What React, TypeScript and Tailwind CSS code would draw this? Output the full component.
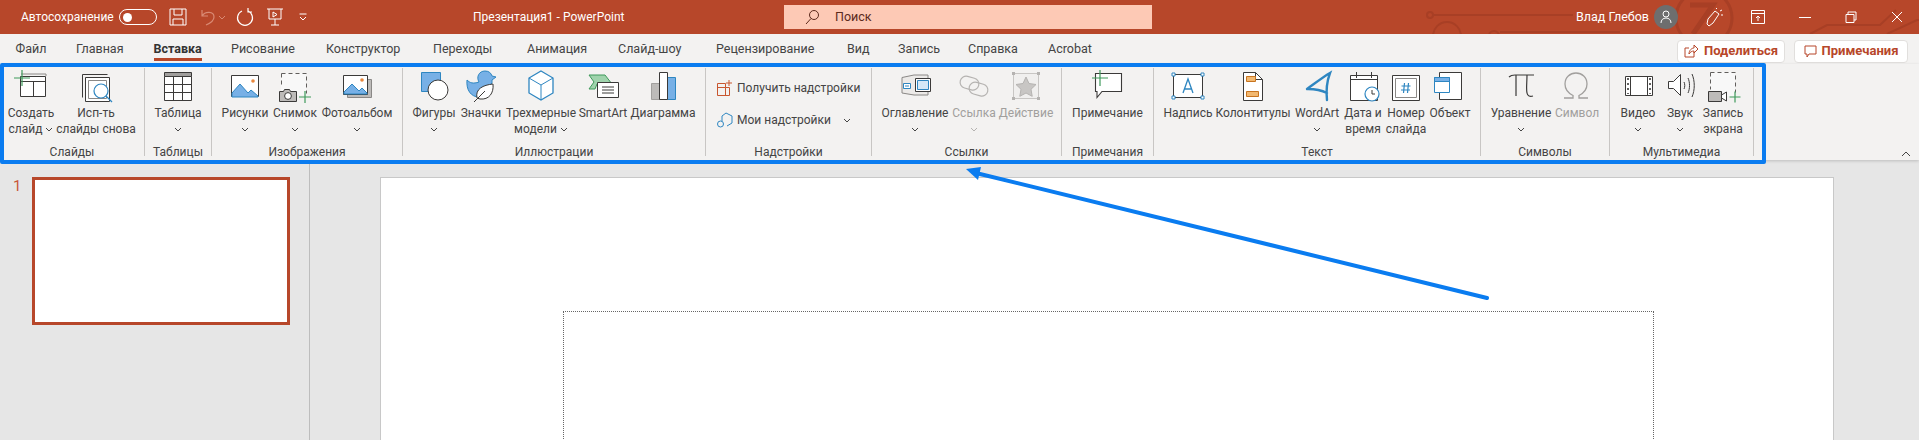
import type { ReactNode } from "react";

const Chevron = ({ color = "#444" }: { color?: string }) => (
  <svg width="8" height="5" viewBox="0 0 8 5" fill="none" stroke={color} strokeWidth="1">
    <path d="M1 1l3 3 3-3" />
  </svg>
);

const Plus = ({ x, y, s = 12 }: { x: number; y: number; s?: number }) => (
  <path d={`M${x - s / 2} ${y}h${s}M${x} ${y - s / 2}v${s}`} stroke="#3f9a5b" strokeWidth="1.2" fill="none" />
);

const Ico = ({ children, w = 36 }: { children: ReactNode; w?: number }) => (
  <svg width={w} height="34" viewBox={`0 0 ${w} 34`} fill="none" strokeWidth="1">
    {children}
  </svg>
);

const dark = "#3b3a39";
const blue = "#2e86c1";
const light = "#77b0e6";

const icons: Record<string, ReactNode> = {
  create: (
    <Ico>
      <path d="M8 5h25v2" stroke="#8a8886" />
      <path d="M7.500 7.500h25v20h-25z" fill="#fff" stroke={dark} />
      <path d="M7.500 12.500h25M20.500 12.500v15" stroke={dark} />
      <Plus x={9} y={9} s={16} />
    </Ico>
  ),
  reuse: (
    <Ico>
      <path d="M4.500 5.500h25M4.500 5.500v23" stroke={dark} />
      <path d="M7.500 8.500h24v24h-24z" fill="#fff" stroke={dark} />
      <path d="M10.500 11.500h18v18h-18z" stroke="#8a8886" />
      <circle cx="23" cy="22" r="7" fill="#fff" stroke={blue} strokeWidth="1.2" />
      <path d="M28 27l6 6" stroke={blue} strokeWidth="1.2" />
    </Ico>
  ),
  table: (
    <Ico w={30}>
      <path d="M1.500 3.500h27v4h-27z" fill="#a19f9d" stroke={dark} />
      <path d="M1.500 7.500h27v24h-27z" fill="#fff" stroke={dark} />
      <path d="M1.500 15.500h27M1.500 23.500h27M10.500 7.500v24M19.500 7.500v24" stroke={dark} />
    </Ico>
  ),
  pictures: (
    <Ico>
      <path d="M4.500 6.500h27v21h-27z" fill="#fff" stroke={dark} />
      <path d="M5 24l8-9 8 9 3-3 7 6v1H5z" fill={light} stroke={blue} />
      <circle cx="26" cy="12" r="1.800" fill="#e8873c" />
    </Ico>
  ),
  snapshot: (
    <Ico>
      <path d="M4 4h25v22H4z" fill="#f8f8f8" />
      <path d="M4.500 4.500h25v20M4.500 4.500v14" stroke="#605e5c" strokeDasharray="4 3" />
      <path d="M2.500 22.500h4l1-2h5l1 2h6v10h-17z" fill="#bdbbb9" stroke={dark} />
      <circle cx="11" cy="27" r="3.400" fill="#fff" stroke={dark} />
      <Plus x={28} y={28} s={12} />
    </Ico>
  ),
  album: (
    <Ico>
      <path d="M8.500 10.500h24v18h-24z" fill="#bdbbb9" stroke="#8a8886" />
      <path d="M4.500 6.500h24v19h-24z" fill="#fff" stroke={dark} />
      <path d="M5 23l8-8 7 7 3-3 5 5v1H5z" fill={light} stroke={blue} />
      <circle cx="23" cy="11" r="1.800" fill="#e8873c" />
    </Ico>
  ),
  shapes: (
    <Ico>
      <path d="M5.500 3.500h19v19h-19z" fill={light} stroke={blue} />
      <circle cx="22" cy="21" r="10" fill="#fff" stroke={dark} />
    </Ico>
  ),
  glyphs: (
    <Ico>
      <path d="M4 11c3 3 6 4 12 2-3-5 0-11 6-11 4 0 6 2 7 5l4 1-4 3v3L16 28C8 28 3 21 4 11z" fill={light} stroke={blue} />
      <path d="M14 29c-2-9 6-13 16-14 1 9-4 16-13 15z" fill="#fff" stroke={dark} />
      <path d="M11 33l11-11" stroke={dark} />
    </Ico>
  ),
  models: (
    <Ico>
      <path d="M18 2l12 7v15l-12 7-12-7V9z" fill="#fff" stroke={blue} strokeWidth="1.300" />
      <path d="M6 9l12 7 12-7M18 16v15" stroke={blue} />
    </Ico>
  ),
  smartart: (
    <Ico>
      <path d="M4 6h16l7 9H12l-2 5H4l5-7z" fill="#9fd3ac" stroke="#3f9a5b" />
      <path d="M12.500 13.500h21v15h-21z" fill="#fff" stroke={dark} />
      <path d="M17 18h12M17 21h12M17 24h12" stroke={dark} />
    </Ico>
  ),
  chart: (
    <Ico w={30}>
      <path d="M3.500 14.500h8v16h-8z" fill="#bdbbb9" stroke="#a19f9d" />
      <path d="M19.500 8.500h8v22h-8z" fill={light} stroke={blue} />
      <path d="M11.500 3.500h8v27h-8z" fill="#fff" stroke={dark} />
    </Ico>
  ),
  toc: (
    <Ico>
      <path d="M5 8.500l12-2.500h14v20H17L5 24z" fill="#eceae8" stroke="#8a8886" />
      <path d="M6.500 14.500h7v5h-7z" fill="#fff" stroke={blue} />
      <path d="M8 17h4" stroke={blue} />
      <path d="M18.500 9.500h15v13h-15z" fill="#fff" stroke={dark} />
      <path d="M20.500 11.500h11v9h-11z" fill="#d5e8f7" stroke={blue} />
    </Ico>
  ),
  link: (
    <Ico>
      <rect x="4" y="8" width="19" height="12" rx="6" stroke="#b5b3b1" strokeWidth="1.200" transform="rotate(15 13 14)" />
      <rect x="13" y="14" width="19" height="12" rx="6" stroke="#b5b3b1" strokeWidth="1.200" transform="rotate(15 22 20)" />
    </Ico>
  ),
  action: (
    <Ico>
      <path d="M5.500 4.500h25v25h-25z" fill="#f0efee" stroke="#c8c6c4" />
      <path d="M4 3h3v3H4zM29 3h3v3h-3zM4 28h3v3H4zM29 28h3v3h-3z" fill="#b5b3b1" />
      <path d="M18 8l3 6.500 7 1-5 4.800 1.200 7L18 24l-6.200 3.300 1.200-7-5-4.800 7-1z" fill="#c8c6c4" stroke="#b5b3b1" />
    </Ico>
  ),
  comment: (
    <Ico>
      <path d="M5.500 4.500h26v18H12l-5 6v-6H5.500z" fill="#fff" stroke={dark} strokeWidth="1.100" />
      <Plus x={10} y={9} s={16} />
    </Ico>
  ),
  textbox: (
    <Ico>
      <path d="M3.500 5.500h29v23h-29z" fill="#fff" stroke={dark} />
      <path d="M2 4h3v3H2zM31 4h3v3h-3zM2 27h3v3H2zM31 27h3v3h-3z" fill="#fff" stroke={blue} />
      <path d="M13 24l5-14 5 14M14.500 20h7" stroke={blue} strokeWidth="1.300" />
    </Ico>
  ),
  header: (
    <Ico w={24}>
      <path d="M2.500 3.500h12l7 7v21h-19z" fill="#fff" stroke={dark} />
      <path d="M14.500 3.500v7h7" stroke={dark} />
      <path d="M5.500 7.500h9v5h-9zM5.500 22.500h12v5h-12z" fill="#f2b870" stroke="#c8741f" />
    </Ico>
  ),
  wordart: (
    <Ico>
      <path d="M8 20C15 15 24 8 31 4c-3 8-4 18-3 27M9 20c6 0 13 1 19 4" stroke={blue} strokeWidth="2.400" strokeLinecap="round" />
    </Ico>
  ),
  date: (
    <Ico>
      <path d="M5.500 6.500h27v25h-27z" fill="#fff" stroke={dark} />
      <path d="M5.500 10.500h27M11.500 3v6M26.500 3v6" stroke={dark} />
      <circle cx="27" cy="25" r="7" fill="#fff" stroke={blue} strokeWidth="1.200" />
      <path d="M27 21v4h3" stroke={dark} />
    </Ico>
  ),
  number: (
    <Ico>
      <path d="M4.500 6.500h27v25h-27z" fill="#fff" stroke={dark} />
      <path d="M7.500 9.500h21v19h-21z" stroke="#8a8886" />
      <path d="M16.500 14l-1 10M20.500 14l-1 10M13.500 17h9M13 21h9" stroke={blue} strokeWidth="1.200" />
    </Ico>
  ),
  object: (
    <Ico>
      <path d="M7.500 3.500h22v27h-22z" fill="#fff" stroke={dark} />
      <path d="M2.500 8.500h15v15h-15z" fill="#fff" stroke={blue} />
      <path d="M2.500 8.500h15v4h-15z" fill={light} stroke={blue} />
    </Ico>
  ),
  pi: (
    <Ico>
      <path d="M6 8c2-2 4-2 6-2h19M13 6v21M24 6c0 8-1 14 0 18 .5 3 3 4 6 3" stroke={dark} strokeWidth="1.200" />
    </Ico>
  ),
  omega: (
    <Ico>
      <path d="M5 29h9v-2.500C9 24 6 20 6 15 6 8.500 11 4 17 4s11 4.500 11 11c0 5-3 9-8 11.500V29h9" stroke="#a19f9d" strokeWidth="1.300" />
    </Ico>
  ),
  video: (
    <Ico>
      <path d="M5.500 7.500h27v19h-27z" fill="#fff" stroke={dark} />
      <path d="M10.500 7.500v19M27.500 7.500v19" stroke={dark} />
      <path d="M8 9v16M30 9v16" stroke={dark} strokeWidth="1.600" strokeDasharray="2 3" />
    </Ico>
  ),
  audio: (
    <Ico>
      <path d="M6.500 12.500h5l7-7v21l-7-7h-5z" fill="#fff" stroke={dark} />
      <path d="M22 13c1 2 1 5 0 7M26 9c2 4 2 11 0 15M30 5c3 7 3 16 0 23" stroke={dark} />
    </Ico>
  ),
  record: (
    <Ico>
      <path d="M5 3h25v24H5z" fill="#f8f8f8" />
      <path d="M5.500 3.500h25v20M5.500 3.500v17" stroke="#605e5c" strokeDasharray="4 3" />
      <path d="M3.500 22.500h13v10h-13z" fill="#bdbbb9" stroke={dark} />
      <path d="M16.500 26l5-3v9l-5-3z" fill="#fff" stroke={dark} />
      <Plus x={30} y={28} s={11} />
    </Ico>
  ),
};

type RibbonItem = {
  icon: string;
  lines: string[];
  width: string;
  chevron?: "inline" | "below";
  disabled?: boolean;
};

const RibbonButton = ({ icon, lines, width, chevron, disabled }: RibbonItem) => (
  <div className={`${width} flex flex-col items-center shrink-0`}>
    <div className="h-[37px] flex items-start justify-center pt-px">{icons[icon]}</div>
    {lines.map((line, i) => (
      <div
        key={line}
        className={`h-4 leading-4 whitespace-nowrap flex items-center gap-[3px] ${disabled ? "text-[#a19f9d]" : ""}`}
      >
        {line}
        {chevron === "inline" && i === lines.length - 1 && <Chevron />}
      </div>
    ))}
    {chevron === "below" && (
      <div className="h-4 flex items-center">
        <Chevron color={disabled ? "#b5b3b1" : "#444"} />
      </div>
    )}
  </div>
);

const Group = ({
  label,
  width,
  pad,
  items,
  children,
}: {
  label: string;
  width: string;
  pad?: string;
  items?: RibbonItem[];
  children?: ReactNode;
}) => (
  <>
    <div className={`${width} shrink-0 flex flex-col pt-1`}>
      <div className={`flex-1 flex ${pad ?? ""}`}>
        {items?.map((item) => <RibbonButton key={item.lines[0]} {...item} />)}
        {children}
      </div>
      <div className="h-4 leading-4 text-center whitespace-nowrap">{label}</div>
    </div>
    <div className="w-px my-1 bg-[#c8c6c4] shrink-0" />
  </>
);

const tabs = [
  { name: "Файл", width: "w-[60.5px]" },
  { name: "Главная", width: "w-[77.5px]" },
  { name: "Вставка", width: "w-[77.5px]" },
  { name: "Рисование", width: "w-[95px]" },
  { name: "Конструктор", width: "w-[107px]" },
  { name: "Переходы", width: "w-[94px]" },
  { name: "Анимация", width: "w-[91px]" },
  { name: "Слайд-шоу", width: "w-[98px]" },
  { name: "Рецензирование", width: "w-[131px]" },
  { name: "Вид", width: "w-[51px]" },
  { name: "Запись", width: "w-[70px]" },
  { name: "Справка", width: "w-[80px]" },
  { name: "Acrobat", width: "w-[46px]" },
];

const TitleBar = () => (
  <div className="h-[34px] bg-[#b7472a] flex items-center text-white text-[12px] relative overflow-hidden">
    <svg className="absolute right-0 top-0" width="499" height="34" viewBox="0 0 499 34" fill="none" stroke="#a83f25" strokeWidth="2">
      <circle cx="10" cy="15" r="3" />
      <path d="M13 15h140M80 32h120" />
      <circle cx="27" cy="36" r="14" />
      <circle cx="74" cy="36" r="5" />
      <circle cx="284" cy="18" r="28" strokeWidth="3" />
      <path d="M270 5h23l-20 29" strokeWidth="5" />
      <path d="M390 34l17-9h53l16-15M467 34l30-14h2" />
    </svg>
    <span className="ml-[21px] w-[98px] relative">Автосохранение</span>
    <div className="w-[38px] h-4 rounded-full border border-white flex items-center pl-[3px]">
      <div className="w-[9px] h-[9px] rounded-full bg-white" />
    </div>
    <svg className="ml-[12px]" width="18" height="18" viewBox="0 0 18 18" fill="none" stroke="#fff">
      <path d="M1 1h16v16H1zM5 1v6h8V1M4 17v-6h10v6" />
    </svg>
    <svg className="ml-[13px]" width="16" height="18" viewBox="0 0 16 18" fill="none" stroke="#d98a74" strokeWidth="1.200">
      <path d="M2 2v6h6M2 8c3-5 12-5 12 1 0 3-3 6-8 8" />
    </svg>
    <div className="ml-[2px]"><Chevron color="#d98a74" /></div>
    <svg className="ml-[10px]" width="18" height="20" viewBox="0 0 18 20" fill="none" stroke="#fff" strokeWidth="1.200">
      <path d="M6 4a7.500 7.500 0 1 0 6 0M12 1v4h4" />
    </svg>
    <svg className="ml-[12px]" width="18" height="18" viewBox="0 0 18 18" fill="none" stroke="#fff">
      <path d="M1 1h16M3 1v10h12V1M9 11v6M5 17h8M7 4l4 2.500L7 9z" />
    </svg>
    <svg className="ml-[15px]" width="8" height="8" viewBox="0 0 8 8" fill="none" stroke="#fff">
      <path d="M0.500 1h7M1 4l3 3 3-3" />
    </svg>
    <span className="ml-[166px] w-[154px] whitespace-pre">Презентация1 - PowerPoint</span>
    <div className="ml-[157px] w-[368px] h-6 bg-[#fdc9b5] flex items-center pl-[20px] text-[#5c2a1c] text-[12.5px] relative">
      <svg width="16" height="16" viewBox="0 0 16 16" fill="none" stroke="#5c2a1c">
        <circle cx="10" cy="6" r="4.500" />
        <path d="M7 9.500L2 15" />
      </svg>
      <span className="ml-[15px]">Поиск</span>
    </div>
    <span className="ml-[424px] w-[67px] whitespace-nowrap relative text-[12.5px]">Влад Глебов</span>
    <div className="ml-[11px] w-6 h-6 rounded-full bg-[#6e6e6e] flex items-center justify-center relative">
      <svg width="12" height="14" viewBox="0 0 12 14" fill="none" stroke="#fff">
        <circle cx="6" cy="4" r="3" />
        <path d="M1 13c0-3 2-5 5-5s5 2 5 5" />
      </svg>
    </div>
    <svg className="ml-[27px] relative" width="18" height="20" viewBox="0 0 18 20" fill="none" stroke="#fff">
      <path d="M3 12l7-8 4 3-6 9-4 3-2-2zM11 2l1-1M15 4l2-1M16 8h2" />
    </svg>
    <svg className="ml-[28px] relative" width="14" height="14" viewBox="0 0 14 14" fill="none" stroke="#fff">
      <path d="M0.500 0.500h13v13h-13zM0.500 3.500h13M7 11V6M5 8l2-2 2 2" />
    </svg>
    <svg className="ml-[34px] relative" width="12" height="12" viewBox="0 0 12 12" fill="none" stroke="#fff">
      <path d="M0 6.500h12" />
    </svg>
    <svg className="ml-[34px] relative" width="12" height="12" viewBox="0 0 12 12" fill="none" stroke="#fff">
      <path d="M1 3.500h8v8H1zM3 3V1h8v8H9" />
    </svg>
    <svg className="ml-[34px] relative" width="12" height="12" viewBox="0 0 12 12" fill="none" stroke="#fff">
      <path d="M1 1l10 10M11 1L1 11" />
    </svg>
  </div>
);

const TabBar = () => (
  <div className="h-[30px] bg-[#f3f2f1] flex items-center pl-[15.5px] text-[12.5px] text-[#444]">
    <div className="flex">
      {tabs.map((tab) => (
        <div key={tab.name} className={`${tab.width} relative`}>
          <span className={`relative whitespace-nowrap ${tab.name === "Вставка" ? "font-bold text-[#333]" : ""}`}>
            {tab.name}
            {tab.name === "Вставка" && <span className="absolute left-0 right-0 -bottom-[5px] h-[3px] bg-[#b7472a]" />}
          </span>
        </div>
      ))}
    </div>
    <div className="ml-auto mr-[11px] flex gap-[9px] font-bold text-[13px] text-[#b7472a] mt-1">
      <div className="w-[108px] h-[23px] bg-white border border-[#e1dfdd] rounded-sm flex items-center justify-center gap-[6px]">
        <svg width="14" height="14" viewBox="0 0 14 14" fill="none" stroke="#b7472a">
          <path d="M1 4h4M1 4v9h9V8M5 10c0-4 3-6 5-6V1l4 4-4 4V7c-2 0-4 1-5 3z" />
        </svg>
        Поделиться
      </div>
      <div className="w-[114px] h-[23px] bg-white border border-[#e1dfdd] rounded-sm flex items-center justify-center gap-[5px]">
        <svg width="13" height="13" viewBox="0 0 13 13" fill="none" stroke="#b7472a">
          <path d="M1 1h11v8H5l-2 3V9H1z" />
        </svg>
        Примечания
      </div>
    </div>
  </div>
);

const Ribbon = () => (
  <div className="h-[96px] bg-[#f3f2f1] flex text-[12px] text-[#444] shadow-[0_1px_3px_rgba(0,0,0,0.18)] relative">
    <Group
      label="Слайды"
      width="w-[144px]"
      pad="pl-1"
      items={[
        { icon: "create", lines: ["Создать", "слайд"], width: "w-[54px]", chevron: "inline" },
        { icon: "reuse", lines: ["Исп-ть", "слайды снова"], width: "w-[76px]" },
      ]}
    />
    <Group
      label="Таблицы"
      width="w-[66px]"
      items={[{ icon: "table", lines: ["Таблица"], width: "w-full", chevron: "below" }]}
    />
    <Group
      label="Изображения"
      width="w-[190px]"
      pad="pl-[9px]"
      items={[
        { icon: "pictures", lines: ["Рисунки"], width: "w-[48px]", chevron: "below" },
        { icon: "snapshot", lines: ["Снимок"], width: "w-[52px]", chevron: "below" },
        { icon: "album", lines: ["Фотоальбом"], width: "w-[72px]", chevron: "below" },
      ]}
    />
    <Group
      label="Иллюстрации"
      width="w-[302px]"
      pad="pl-[6px]"
      items={[
        { icon: "shapes", lines: ["Фигуры"], width: "w-[50px]", chevron: "below" },
        { icon: "glyphs", lines: ["Значки"], width: "w-[44px]" },
        { icon: "models", lines: ["Трехмерные", "модели"], width: "w-[76px]", chevron: "inline" },
        { icon: "smartart", lines: ["SmartArt"], width: "w-[48px]" },
        { icon: "chart", lines: ["Диаграмма"], width: "w-[72px]" },
      ]}
    />
    <Group label="Надстройки" width="w-[165px]">
      <div className="flex flex-col pl-[11px] pt-[12px] text-[12px]">
        <div className="h-4 flex items-center gap-1 whitespace-nowrap">
          <svg width="16" height="16" viewBox="0 0 16 16" fill="none" stroke="#c8562f">
            <path d="M0.500 3.500h8v4h4v8h-12zM0.500 7.500h8v8M12 0v6M9 3h6" />
          </svg>
          Получить надстройки
        </div>
        <div className="h-4 mt-4 flex items-center gap-1 whitespace-nowrap">
          <svg width="16" height="16" viewBox="0 0 16 16" fill="none" stroke={blue}>
            <path d="M9 1l6 3v7l-5 3M5 9V4l4-3" />
            <circle cx="3.500" cy="12" r="3" />
          </svg>
          Мои надстройки
          <span className="ml-[8px]"><Chevron /></span>
        </div>
      </div>
    </Group>
    <Group
      label="Ссылки"
      width="w-[189px]"
      pad="pl-[9px]"
      items={[
        { icon: "toc", lines: ["Оглавление"], width: "w-[68px]", chevron: "below" },
        { icon: "link", lines: ["Ссылка"], width: "w-[50px]", chevron: "below", disabled: true },
        { icon: "action", lines: ["Действие"], width: "w-[54px]", disabled: true },
      ]}
    />
    <Group
      label="Примечания"
      width="w-[91px]"
      items={[{ icon: "comment", lines: ["Примечание"], width: "w-full" }]}
    />
    <Group
      label="Текст"
      width="w-[326px]"
      pad="pl-[9px]"
      items={[
        { icon: "textbox", lines: ["Надпись"], width: "w-[50px]" },
        { icon: "header", lines: ["Колонтитулы"], width: "w-[80px]" },
        { icon: "wordart", lines: ["WordArt"], width: "w-[48px]", chevron: "below" },
        { icon: "date", lines: ["Дата и", "время"], width: "w-[44px]" },
        { icon: "number", lines: ["Номер", "слайда"], width: "w-[42px]" },
        { icon: "object", lines: ["Объект"], width: "w-[46px]" },
      ]}
    />
    <Group
      label="Символы"
      width="w-[128px]"
      pad="pl-[8px]"
      items={[
        { icon: "pi", lines: ["Уравнение"], width: "w-[64px]", chevron: "below" },
        { icon: "omega", lines: ["Символ"], width: "w-[48px]", disabled: true },
      ]}
    />
    <Group
      label="Мультимедиа"
      width="w-[143px]"
      pad="pl-[8px]"
      items={[
        { icon: "video", lines: ["Видео"], width: "w-[40px]", chevron: "below" },
        { icon: "audio", lines: ["Звук"], width: "w-[44px]", chevron: "below" },
        { icon: "record", lines: ["Запись", "экрана"], width: "w-[42px]" },
      ]}
    />
    <svg className="absolute right-[8px] bottom-[3px]" width="10" height="6" viewBox="0 0 10 6" fill="none" stroke="#444">
      <path d="M1 5l4-4 4 4" />
    </svg>
  </div>
);

const Workspace = () => (
  <div className="flex-1 flex bg-[#e6e6e6] overflow-hidden">
    <div className="w-[310px] shrink-0 border-r border-[#bdbdbd] flex items-start pt-[17px]">
      <span className="w-[32px] pl-[13px] pt-[1px] text-[#c8563a] text-[15px] leading-4">1</span>
      <div className="w-[258px] h-[148px] bg-white border-[3px] border-[#b7472a]" />
    </div>
    <div className="flex-1 pt-[17px] pl-[70px]">
      <div className="w-[1454px] h-[300px] bg-white border border-[#c8c8c8] pt-[133px] pl-[182px]">
        <div className="w-[1091px] h-[200px] border border-dotted border-[#666]" />
      </div>
    </div>
  </div>
);

export default function App() {
  return (
    <div className="w-[1919px] h-[440px] overflow-hidden relative flex flex-col font-['Roboto',sans-serif]">
      <TitleBar />
      <TabBar />
      <Ribbon />
      <Workspace />
      {/* Annotation drawn on top of the screenshot */}
      <div className="absolute left-0 top-[63px] w-[1766px] h-[101px] border-4 border-[#0a7cf0] rounded-[2px]" />
      <svg className="absolute left-0 top-0 pointer-events-none" width="1919" height="440" viewBox="0 0 1919 440" fill="none">
        <path d="M1487 298L978 173.500" stroke="#0a7cf0" strokeWidth="4" strokeLinecap="round" />
        <path d="M966 169l15-2-3 13z" fill="#0a7cf0" />
      </svg>
    </div>
  );
}
